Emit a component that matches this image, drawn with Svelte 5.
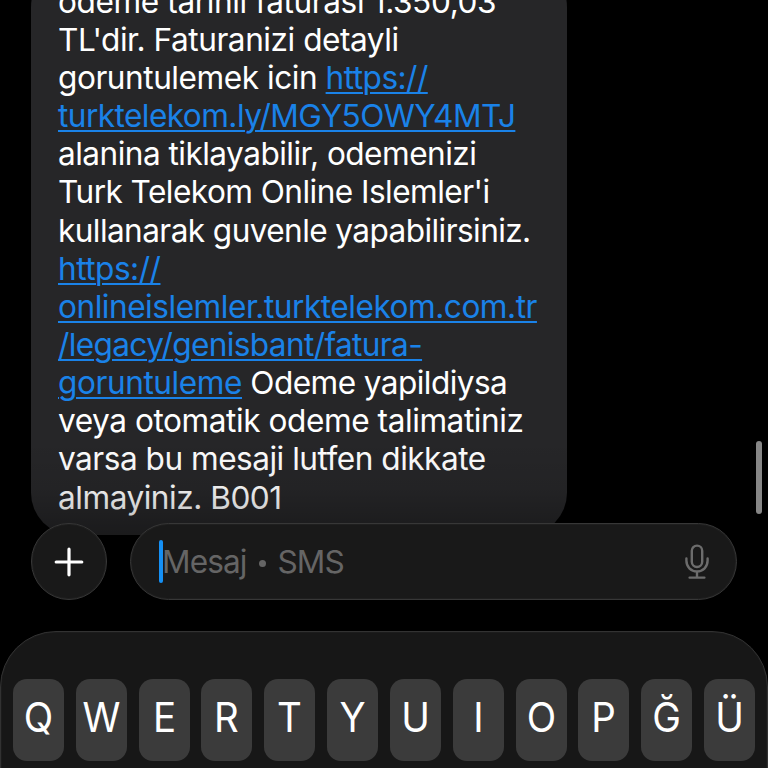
<script>
  // Each line is a list of runs; `ls` fine-tunes the tracking of a run.
  const lines = [
    [{ t: 'odeme tarihli faturasi 1.350,03', ls: -0.39 }],
    [{ t: "TL'dir. Faturanizi detayli", ls: -0.46 }],
    [{ t: 'goruntulemek icin ', ls: -0.46 }, { t: 'https://', link: true, ls: -0.54 }],
    [{ t: 'turktelekom.ly/MGY5OWY4MTJ', link: true, ls: -0.56 }],
    [{ t: 'alanina tiklayabilir, odemenizi', ls: -0.53 }],
    [{ t: "Turk Telekom Online Islemler'i", ls: -0.55 }],
    [{ t: 'kullanarak guvenle yapabilirsiniz.', ls: -0.59 }],
    [{ t: 'https://', link: true, ls: -0.5 }],
    [{ t: 'onlineislemler.turktelekom.com.tr', link: true, ls: -0.48 }],
    [{ t: '/legacy/genisbant/fatura-', link: true, ls: -0.64 }],
    [{ t: 'goruntuleme', link: true, ls: -0.43 }, { t: ' Odeme yapildiysa', ls: -0.57 }],
    [{ t: 'veya otomatik odeme talimatiniz', ls: -0.44 }],
    [{ t: 'varsa bu mesaji lutfen dikkate', ls: -0.5 }],
    [{ t: 'almayiniz. B001', ls: -0.48 }]
  ];
  const keys = ['Q', 'W', 'E', 'R', 'T', 'Y', 'U', 'I', 'O', 'P', 'Ğ', 'Ü'];
</script>

<main class="screen">
  <section class="thread">
    <div class="bubble">
      {#each lines as line}
        <div class="line">{#each line as run}<span class:link={run.link} style:letter-spacing="{run.ls}px">{run.t}</span>{/each}</div>
      {/each}
    </div>
    <div class="fade"></div>
    <div class="scrollbar"></div>
  </section>

  <section class="composer">
    <button class="add" aria-label="Ekle">
      <svg width="30" height="30" viewBox="0 0 30 30" fill="none" stroke="#fff" stroke-width="3.2" stroke-linecap="round">
        <path d="M15 2.2V27.8M2.2 15H27.8" />
      </svg>
    </button>
    <div class="field">
      <span class="caret"></span>
      <span class="placeholder">Mesaj <i></i> SMS</span>
      <svg class="mic" width="24" height="36" viewBox="0 0 24 36" fill="none" stroke="#6c6c6c" stroke-width="2.4" stroke-linecap="round">
        <rect x="6.8" y="1.6" width="10.4" height="21.4" rx="5.2" />
        <path d="M1.4 14.5V16.5C1.4 22.8 5.8 27.4 12 27.4S22.6 22.8 22.6 16.5V14.5M12 27.4V33.6M4.6 33.6H19.4" />
      </svg>
    </div>
  </section>

  <section class="keyboard">
    {#each keys as key}
      <button class="key"><span>{key}</span></button>
    {/each}
  </section>
</main>

<style>
  :global(body) {
    background: #000;
  }
  .screen {
    width: 768px;
    height: 768px;
    overflow: hidden;
    background: #000;
    color: #fff;
    font-family: Inter, 'Liberation Sans', sans-serif;
    display: flex;
    flex-direction: column;
  }
  button {
    border: 0;
    padding: 0;
    margin: 0;
    font: inherit;
    color: inherit;
  }
  .thread {
    position: relative;
    flex: none;
    height: 535px;
    overflow: hidden;
    display: flex;
    flex-direction: column;
    justify-content: flex-end;
  }
  .bubble {
    flex: none;
    box-sizing: border-box;
    width: 535.5px;
    margin-left: 31px;
    padding: 18px 20px 18.3px 27px;
    border-radius: 42px;
    background: #262628;
  }
  .line {
    height: 38.15px;
    line-height: 38.15px;
    font-size: 31.6px;
    white-space: pre;
  }
  .link {
    color: #1a82e8;
    text-decoration: underline;
    text-decoration-thickness: 2px;
    text-underline-offset: 3px;
  }
  .fade {
    position: absolute;
    left: 0;
    right: 0;
    bottom: 0;
    height: 95px;
    background: linear-gradient(rgba(0, 0, 0, 0), rgba(0, 0, 0, 0.08) 50%, rgba(0, 0, 0, 0.3));
  }
  .scrollbar {
    position: absolute;
    left: 756px;
    top: 441px;
    width: 6px;
    height: 73px;
    border-radius: 3px;
    background: #868686;
  }
  .composer {
    position: relative;
    flex: none;
    display: flex;
    gap: 23px;
    height: 77px;
    margin: -12px 31px 0 31px;
  }
  .add,
  .field {
    box-sizing: border-box;
    display: flex;
    align-items: center;
    border: 1px solid #373737;
    border-radius: 39px;
    background: #191919;
    box-shadow: inset 0 0 0 1px #1f1f1f;
  }
  .add {
    width: 76px;
    justify-content: center;
  }
  .field {
    flex: 1;
    padding: 0 27px 0 28px;
  }
  .caret {
    width: 4px;
    height: 43px;
    border-radius: 2px;
    background: #1590f5;
  }
  .placeholder {
    flex: 1;
    margin-left: -1px;
    font-size: 31.6px;
    letter-spacing: -0.9px;
    color: #656565;
    display: flex;
    align-items: center;
    white-space: pre;
  }
  .placeholder i {
    width: 7px;
    height: 7px;
    margin: 4px 4px 0;
    border-radius: 50%;
    background: #656565;
  }
  .keyboard {
    box-sizing: border-box;
    flex: none;
    display: flex;
    justify-content: space-between;
    align-items: flex-start;
    width: 768px;
    height: 180px;
    margin-top: 31px;
    padding: 46.5px 12px 0 12px;
    border: 1px solid #323232;
    border-radius: 56px 56px 0 0;
    background: #171717;
    box-shadow: inset 0 0 0 1px #1c1c1c;
  }
  .key {
    width: 51px;
    height: 82px;
    border-radius: 14px;
    background: #3b3b3b;
    font-size: 40.5px;
    line-height: 78px;
    text-align: center;
  }
  .key span {
    display: block;
    margin-top: -3px;
    transform: scaleX(0.95);
  }
</style>
